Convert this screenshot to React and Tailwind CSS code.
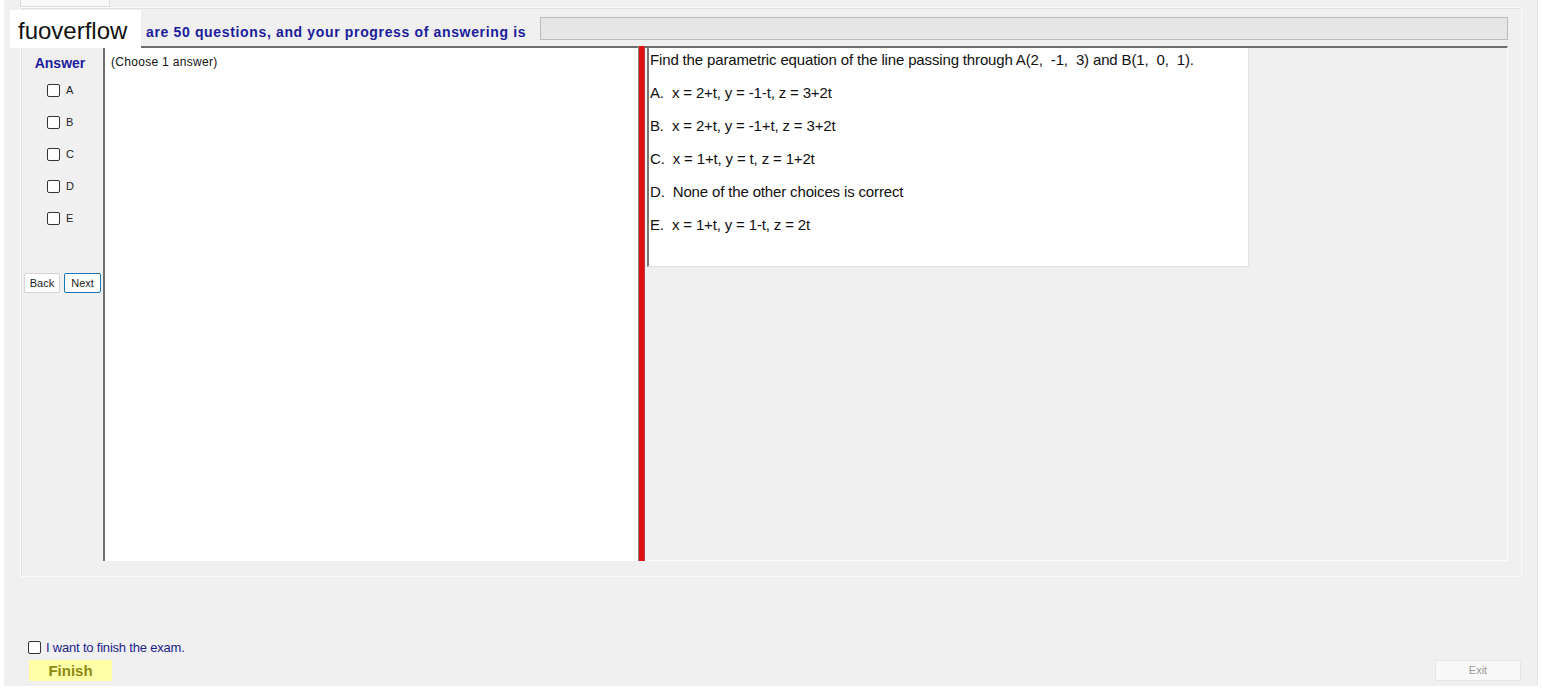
export default function App() {
  const opts = ["A", "B", "C", "D", "E"];
  const answers = [
    "A.  x = 2+t, y = -1-t, z = 3+2t",
    "B.  x = 2+t, y = -1+t, z = 3+2t",
    "C.  x = 1+t, y = t, z = 1+2t",
    "D.  None of the other choices is correct",
    "E.  x = 1+t, y = 1-t, z = 2t",
  ];
  return (
    <div className="w-[1542px] h-[690px] bg-white overflow-hidden relative" style={{ fontFamily: '"Liberation Sans", Arial, sans-serif' }}>
      <div className="ml-[4px] w-[1534px] h-[686px] bg-[#f0f0f0] flex flex-col border-r border-[#e4e4e4]">
        {/* top tab strip */}
        <div className="h-[7px] flex">
          <div className="ml-[16px] w-[90px] h-[7px] bg-[#f9f9f9] border-x border-b border-[#dcdcdc]" />
        </div>
        {/* group box */}
        <div className="ml-[16px] w-[1502px] h-[570px] border border-[#fafafa] shadow-[inset_1px_1px_0_#e2e2e2] flex flex-col pt-[9px]">
          {/* header */}
          <div className="h-[23px] flex items-center">
            <div className="ml-[125px] w-[394px] text-[14px] tracking-[0.65px] font-bold text-[#1c1c9c] leading-none pt-[6px]">are 50 questions, and your progress of answering is</div>
            <div className="w-[968px] h-[23px] bg-[#e6e6e6] border border-[#bcbcbc]" />
          </div>
          {/* main */}
          <div className="mt-[6px] h-[515px] flex ml-[1px]">
            {/* left column */}
            <div className="w-[81px] flex flex-col">
              <div className="h-[32px] flex items-center justify-center pr-[5px] pt-[2px] text-[14px] font-bold text-[#1c1c9c]">Answer</div>
              <div className="flex flex-col pt-[6px]">
                {opts.map((o) => (
                  <div key={o} className="h-[32px] flex items-start pl-[25px]">
                    <div className="w-[13px] h-[13px] border border-[#333] rounded-[2px] bg-white" />
                    <span className="ml-[6px] text-[11px] leading-[12px] text-[#222]">{o}</span>
                  </div>
                ))}
              </div>
              <div className="mt-[29px] flex gap-[4px] pl-[2px]">
                <div className="w-[36px] h-[20px] bg-white border border-[#d4d4d4] rounded-[2px] flex items-center justify-center text-[11px] text-[#222]">Back</div>
                <div className="w-[37px] h-[20px] bg-white border border-[#1a74b8] rounded-[2px] flex items-center justify-center text-[11px] text-[#222]">Next</div>
              </div>
            </div>
            {/* panel 1 */}
            <div className="w-[535px] bg-white border-l-2 border-t-2 border-[#6e6e6e] pl-[6px] pt-[7px]">
              <div className="text-[12px] tracking-[0.3px] text-[#111] leading-[14px]">(Choose 1 answer)</div>
            </div>
            {/* splitter */}
            <div className="w-[7px] flex">
              <div className="w-[1px] bg-[#8a8a8a]" />
              <div className="w-[5px] bg-[#e01010]" />
              <div className="w-[1px] bg-[#b04040]" />
            </div>
            {/* right panel */}
            <div className="w-[863px] bg-[#f0f0f0] border-t-2 border-[#6e6e6e] border-r border-r-[#fbfbfb] border-b border-b-[#fbfbfb] pl-[2px]">
              <div className="w-[602px] h-[219px] bg-white border-l-2 border-[#7a7a7a] border-r border-r-[#e2e2e2] border-b border-b-[#e2e2e2] pl-[1px] pt-[3px]">
                <div className="text-[15px] leading-[18px] text-[#111] whitespace-pre tracking-[-0.15px]">Find the parametric equation of the line passing through A(2,  -1,  3) and B(1,  0,  1).</div>
                {answers.map((a) => (
                  <div key={a} className="mt-[15px] text-[15px] leading-[18px] text-[#111] whitespace-pre tracking-[-0.15px]">{a}</div>
                ))}
              </div>
            </div>
          </div>
        </div>
        {/* bottom */}
        <div className="mt-[63px] ml-[24px] flex items-center h-[14px]">
          <div className="w-[13px] h-[13px] border border-[#333] rounded-[2px] bg-white" />
          <span className="ml-[5px] text-[13px] text-[#1c1c8c] tracking-[-0.2px] pt-[2px]">I want to finish the exam.</span>
        </div>
        <div className="mt-[6px] flex h-[21px]">
          <div className="ml-[25px] w-[83px] h-[21px] bg-[#ffffa8] flex items-center justify-center text-[15px] font-bold text-[#8a8a10] pt-[1px]">Finish</div>
          <div className="ml-auto mr-[16px] w-[86px] h-[21px] bg-[#f8f8f8] border border-[#e6e6e6] flex items-center justify-center text-[11px] text-[#9a9a9a]">Exit</div>
        </div>
      </div>
      {/* watermark logo */}
      <div className="absolute left-[10px] top-[10px] w-[131px] h-[38px] bg-white flex items-center pl-[8px] pt-[4px] text-[24px] text-[#111] leading-none">fuoverflow</div>
    </div>
  );
}
